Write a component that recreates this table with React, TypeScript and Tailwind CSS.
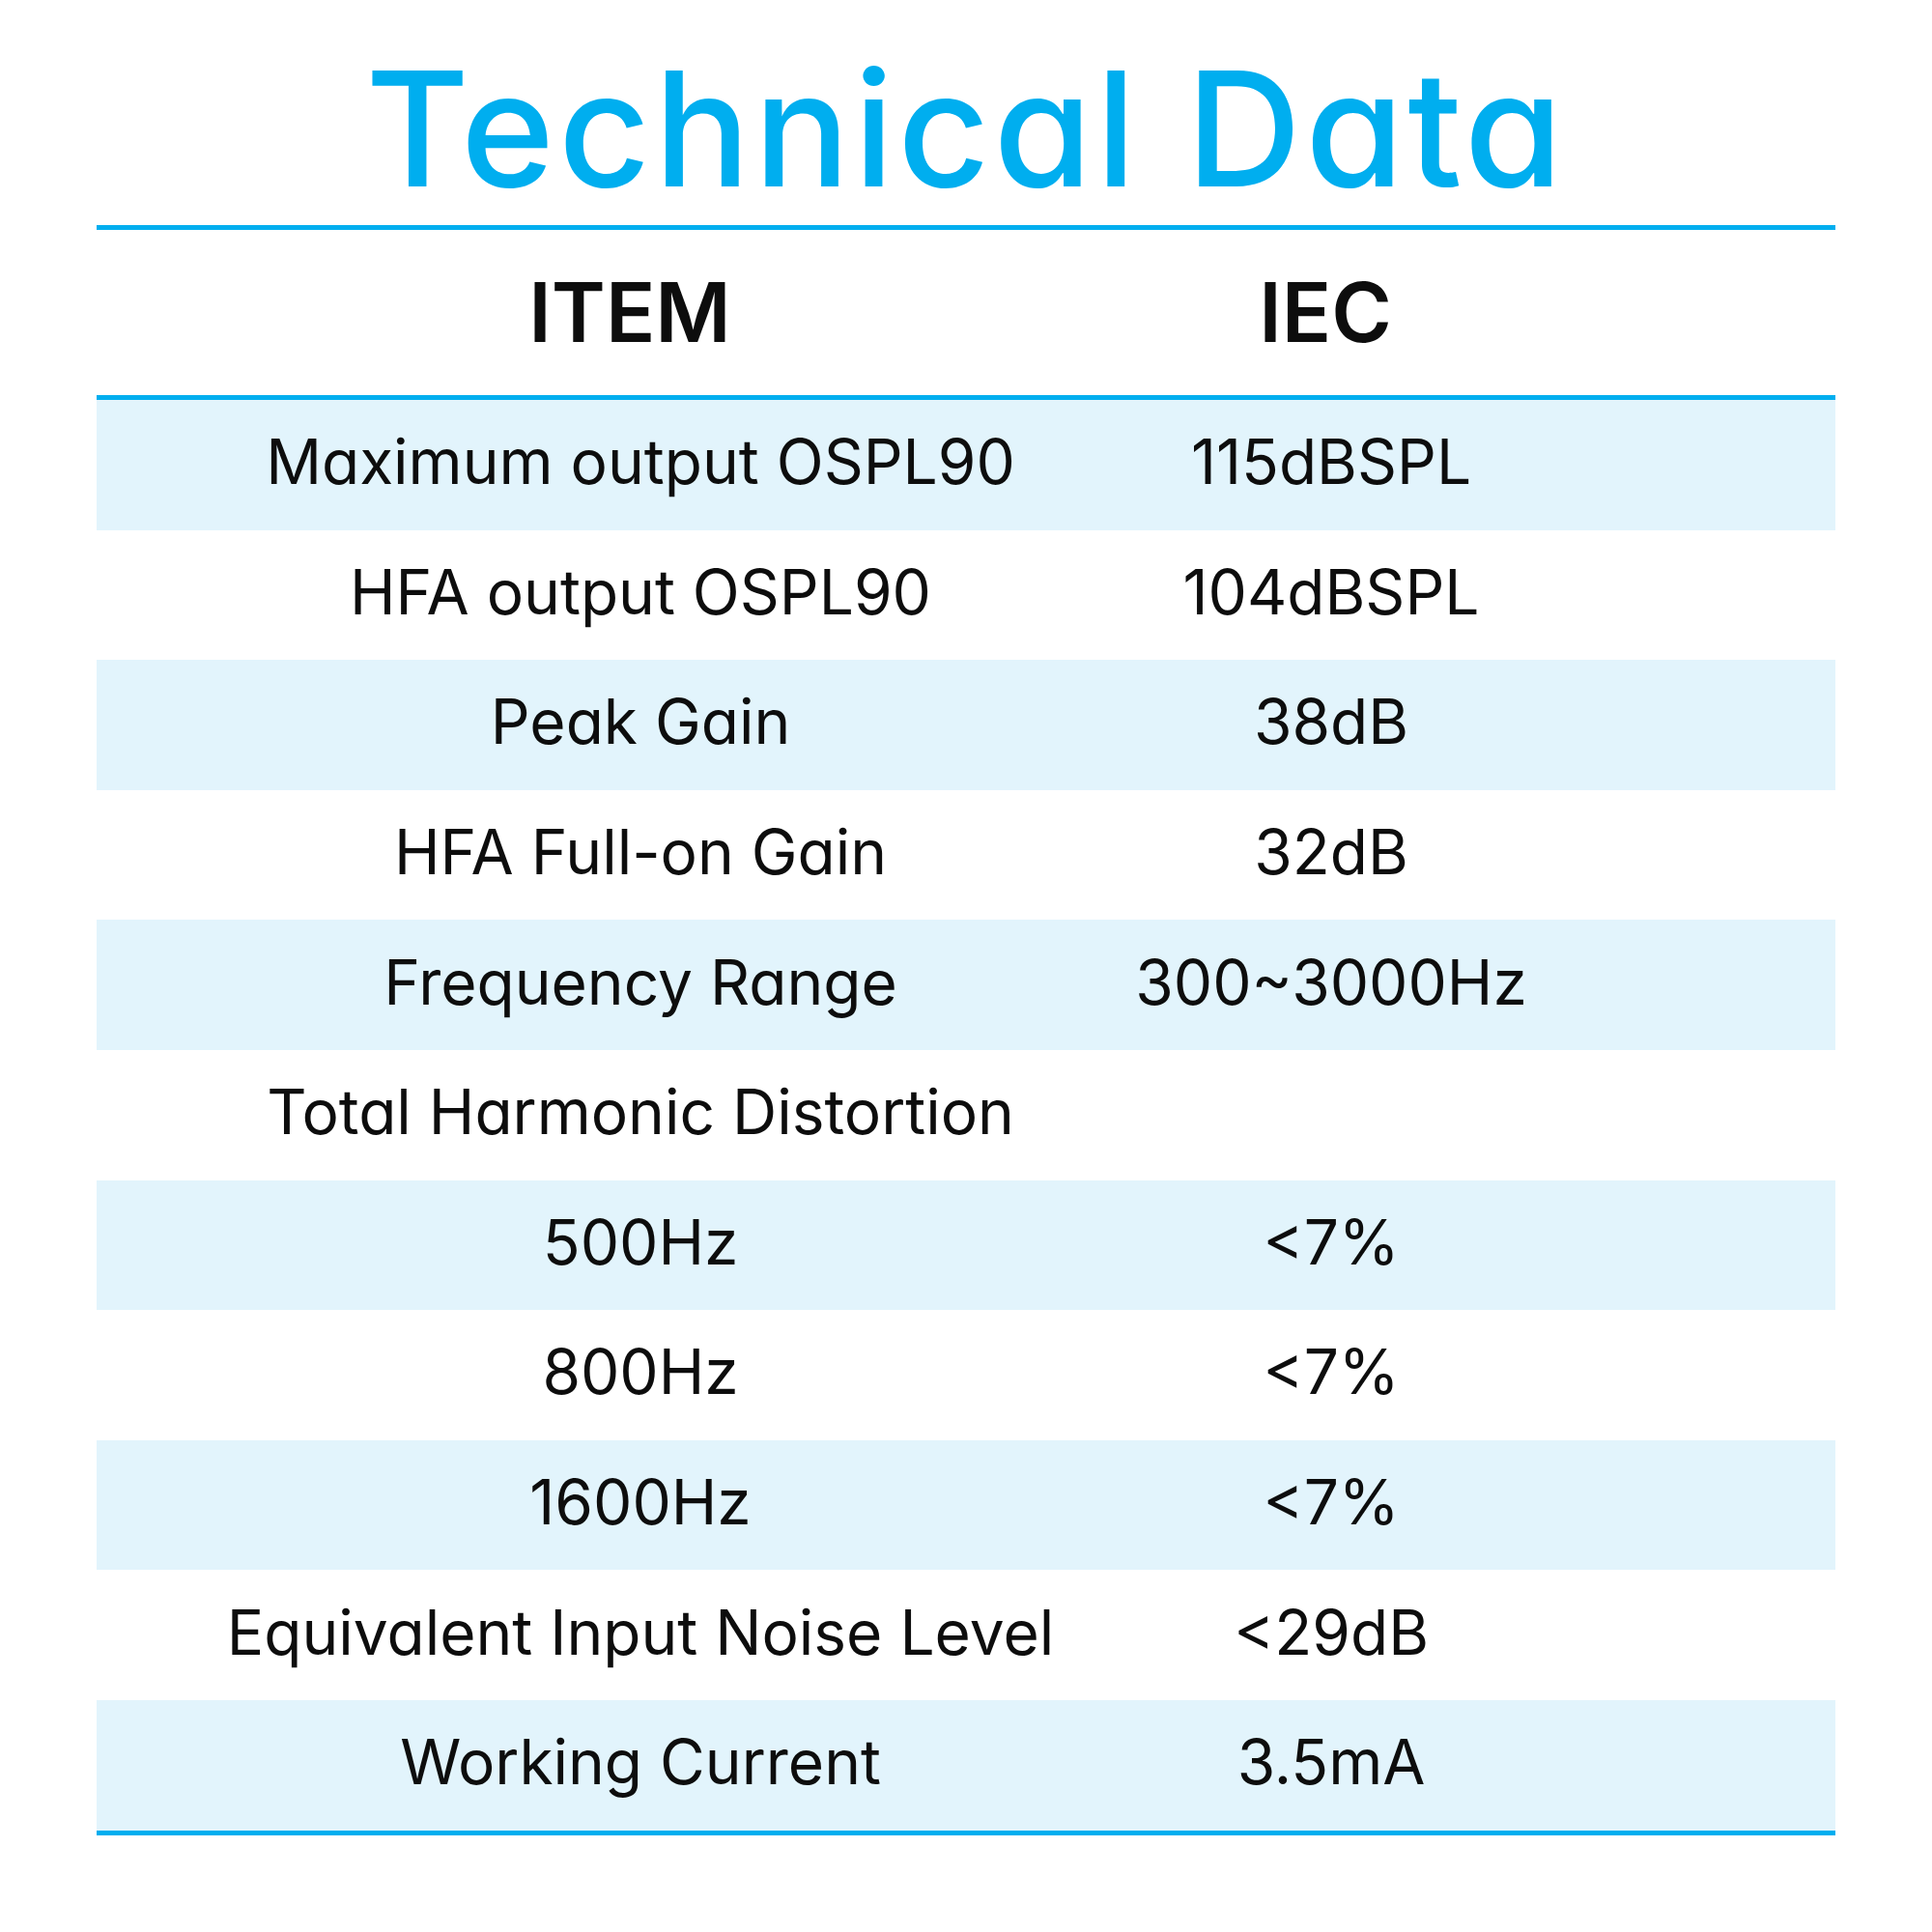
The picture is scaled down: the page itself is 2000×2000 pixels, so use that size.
import React from 'react';

const rows: [string, string][] = [
  ['Maximum output OSPL90', '115dBSPL'],
  ['HFA output OSPL90', '104dBSPL'],
  ['Peak Gain', '38dB'],
  ['HFA Full-on Gain', '32dB'],
  ['Frequency Range', '300~3000Hz'],
  ['Total Harmonic Distortion', ''],
  ['500Hz', '<7%'],
  ['800Hz', '<7%'],
  ['1600Hz', '<7%'],
  ['Equivalent Input Noise Level', '<29dB'],
  ['Working Current', '3.5mA'],
];

const App = () => {
  return (
    <div className="w-[2000px] h-[2000px] bg-white font-['Inter','Liberation_Sans',sans-serif] [font-feature-settings:'cv11'_on] text-[#0d0d0d]">
      {/* title */}
      <div className="h-[233px] flex items-center justify-center pt-[34px]">
        <h1 className="text-[165px] font-medium leading-none text-[#00aeef] tracking-[4px]">
          Technical Data
        </h1>
      </div>

      <div className="mx-[100px] border-t-[5px] border-b-[5px] border-[#00aeef]">
        {/* header */}
        <div className="grid grid-cols-[1104px_336px] h-[171px] items-center text-[85px] font-semibold leading-none">
          <div className="flex justify-center">ITEM</div>
          <div className="flex justify-center">IEC</div>
        </div>
      </div>

      {/* rows */}
      <div className="mx-[100px] flex flex-col border-b-[5px] border-[#00aeef]">
        {rows.map(([item, value], i) => (
          <div
            key={item}
            className={`grid grid-cols-[1126px_304px] h-[134.6px] items-center pb-[6px] text-[64px] leading-none ${
              i % 2 === 0 ? 'bg-[#e2f4fc]' : 'bg-white'
            }`}
          >
            <div className="flex justify-center whitespace-nowrap">{item}</div>
            <div className="flex justify-center whitespace-nowrap">{value}</div>
          </div>
        ))}
      </div>
    </div>
  );
};

export default App;
